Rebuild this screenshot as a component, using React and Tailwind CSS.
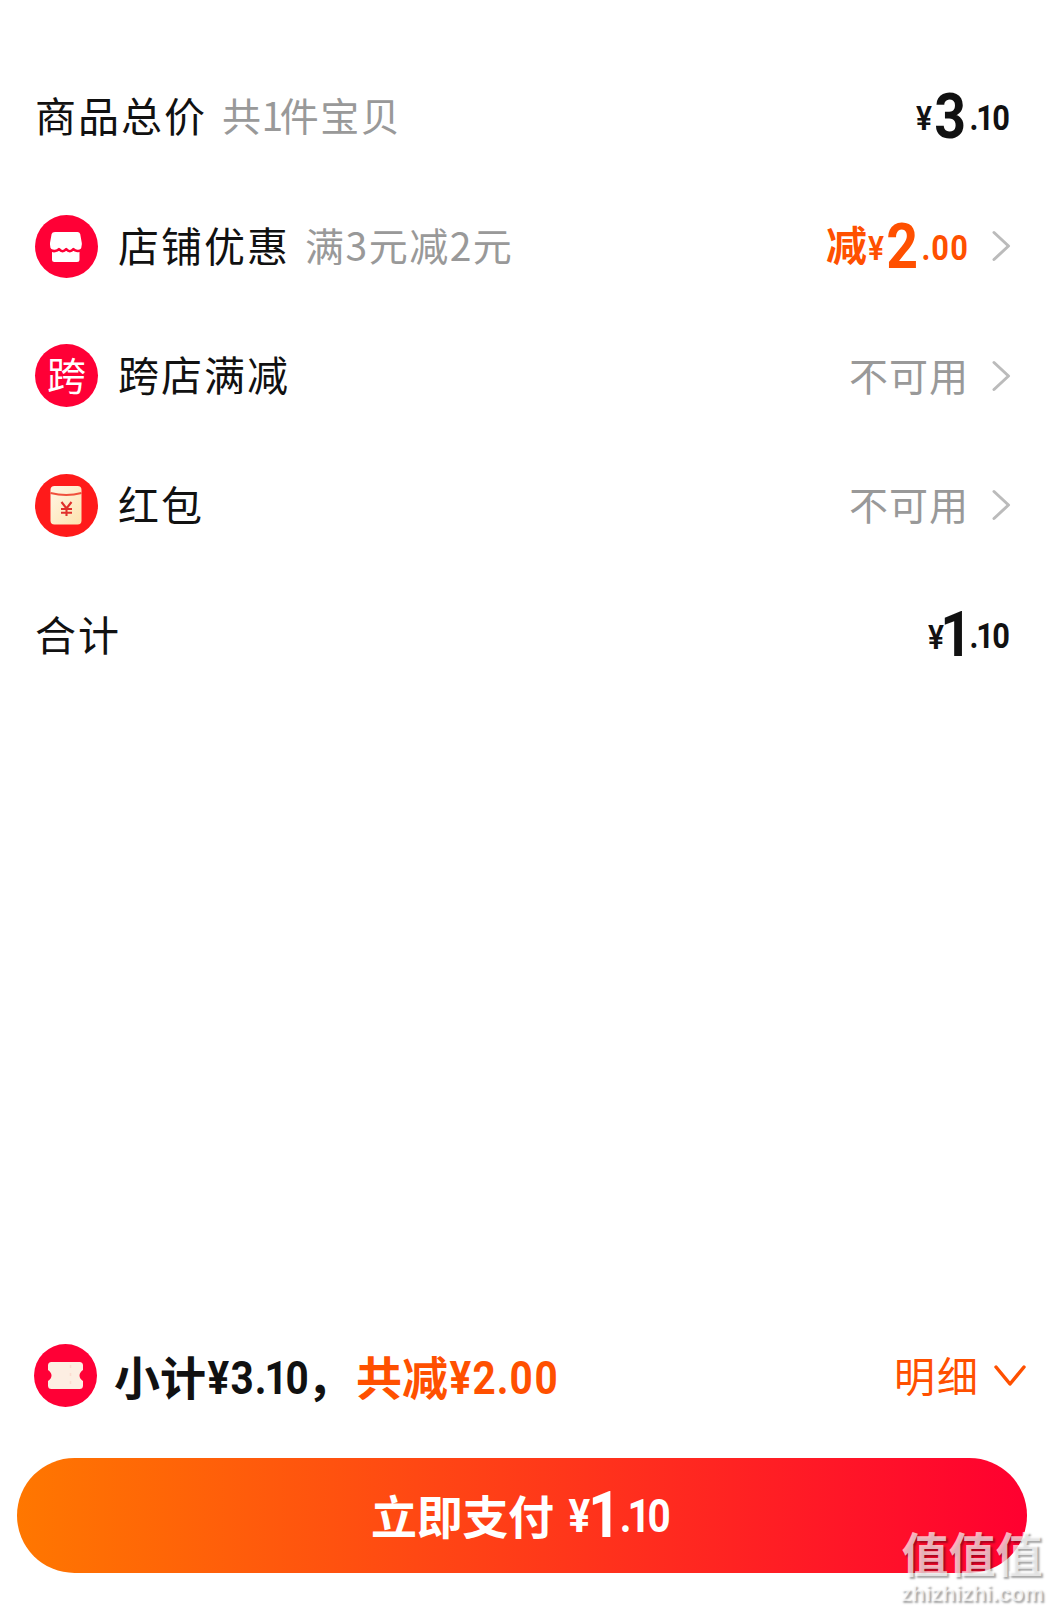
const ROWS = [
  { id: 'shop', label: '店铺优惠', hint: '满3元减2元', height: 'h-[130px]' },
  { id: 'cross', label: '跨店满减', height: 'h-[129px]' },
  { id: 'packet', label: '红包', height: 'h-[130px]' },
]

// One condensed numeral, centred in a cell as wide as its ink
function Digit({ children, className }) {
  return (
    <span className={`flex justify-center font-['Roboto',sans-serif] leading-none ${className}`}>
      <span className="block scale-x-[0.88]">{children}</span>
    </span>
  )
}

function Price({ whole, cents, narrow }) {
  return (
    <span className="flex items-center font-bold">
      <Digit className="w-[16px] text-[34px] pt-1 font-semibold">¥</Digit>
      <Digit className={`text-[63px] ${narrow ? 'w-[21px] ml-[2px] mr-[3px]' : 'w-[27px] ml-[5px] mr-[6px]'}`}>{whole}</Digit>
      <Digit className="w-[9px] text-[35px] pt-1">.</Digit>
      {cents.split('').map((c, i) => (
        <Digit key={i} className={`text-[35px] pt-1 ${c === '1' ? 'w-[13px]' : 'w-[16px] ml-[1px] mr-[2px]'}`}>{c}</Digit>
      ))}
    </span>
  )
}

function ChevronRight() {
  return (
    <svg className="w-[19px] h-[32px] ml-[23px]" viewBox="0 0 19 32" fill="none" stroke="#bbbbbb" strokeWidth="3" strokeLinecap="round" strokeLinejoin="round">
      <path d="M2 2.5 L16.5 16 L2 29.5" />
    </svg>
  )
}

function ShopIcon() {
  return (
    <svg className="w-[63px] h-[63px]" viewBox="0 0 63 63">
      <circle cx="31.5" cy="31.5" r="31.5" fill="#ff0036" />
      <path fill="#fff" d="M20 17h22.500q2 0 2.700 2l1.600 9q.4 4.500-2.300 7.500V44.500q0 2.500-2.500 2.500H19.500q-2.500 0-2.500-2.500V35.500q-2.400-3-2-7.500l1.600-9q.6-2 3.400-2z" />
      <path d="M14 34q3 2.500 6 2 2.600-.3 4-1.800 3.500 4 7.200 0 3.600 4 7.200 0 1.500 1.600 4 1.800 3 .4 6-2" fill="none" stroke="#ff0036" strokeWidth="2.600" strokeLinejoin="round" />
    </svg>
  )
}

function CrossIcon() {
  return (
    <span className="flex w-[63px] h-[63px] items-center justify-center rounded-full bg-[#ff0036] pb-[4px] text-[39px] leading-none text-white">
      跨
    </span>
  )
}

function PacketIcon() {
  return (
    <svg className="w-[63px] h-[63px]" viewBox="0 0 63 63">
      <defs>
        <linearGradient id="packet" x1="0" y1="0" x2="1" y2="1">
          <stop offset="0" stopColor="#fff6e6" />
          <stop offset="1" stopColor="#fde3ae" />
        </linearGradient>
      </defs>
      <circle cx="31.5" cy="31.5" r="31.5" fill="#ff1a1a" />
      <rect x="15.5" y="12" width="31" height="38.5" rx="4" fill="url(#packet)" />
      <path d="M15.5 19q16 4 31 0" fill="none" stroke="#f0503c" strokeWidth="2" />
      <path d="M26.5 28l5 6.5 5-6.5M31.5 34.5v7.5M26 35h11M26 38.7h11" fill="none" stroke="#e0302c" strokeWidth="2.1" />
    </svg>
  )
}

function CouponIcon() {
  return (
    <svg className="w-[63px] h-[63px]" viewBox="0 0 63 63">
      <circle cx="31.5" cy="31.5" r="31.5" fill="#ff0036" />
      <path fill="#fdeee2" d="M17.500 18h28q3.500 0 3.500 3.500v4.500q-3.500 2.500-3.500 5.500t3.500 5.500v4.500q0 3.500-3.500 3.500h-28q-3.500 0-3.500-3.500V37q3.500-2.500 3.500-5.500T14 26v-4.500q0-3.500 3.500-3.500z" />
      <path d="M36.500 21v22" stroke="#fcdcd0" strokeWidth="1.5" strokeDasharray="3 5" />
    </svg>
  )
}

const ICONS = { shop: ShopIcon, cross: CrossIcon, packet: PacketIcon }

function Label({ children }) {
  return <span className="pb-[4px] text-[41px] leading-none tracking-[2px]">{children}</span>
}

function Hint({ children }) {
  return <span className="ml-[15px] pb-[4px] text-[39px] leading-none tracking-[1.5px] text-[#999999]">{children}</span>
}

function DiscountRow({ row }) {
  const Icon = ICONS[row.id]
  return (
    <div className={`flex items-center pl-[35px] pr-[40px] ${row.height}`}>
      <Icon />
      <span className="ml-[20px] flex items-center">
        <Label>{row.label}</Label>
        {row.hint && <Hint>{row.hint}</Hint>}
      </span>
      <span className="ml-auto flex items-center">
        {row.id === 'shop' ? (
          <span className="flex items-center text-[#ff5000]">
            <span className="mr-[1px] pb-[6px] text-[41px] font-bold leading-none">减</span>
            <Price whole="2" cents="00" />
          </span>
        ) : (
          <span className="pb-[3px] text-[39px] leading-none tracking-[1px] text-[#999999]">不可用</span>
        )}
        <ChevronRight />
      </span>
    </div>
  )
}

function Amount({ value }) {
  return (
    <span className="flex pt-[4px] text-[46px]">
      <Digit className="w-[24px]">¥</Digit>
      {value.split('').map((c, i) => (
        <Digit key={i} className={c === '.' ? 'w-[12px]' : c === '1' ? 'w-[18px]' : 'w-[25px]'}>{c}</Digit>
      ))}
    </span>
  )
}

export default function App() {
  return (
    <main lang="zh-CN" className="relative flex h-[1612px] w-[1051px] flex-col overflow-hidden bg-white pt-[51px] font-['Noto_Sans_CJK_SC',sans-serif] text-[#111111]">
      <div className="flex h-[130px] items-center justify-between pl-[35px] pr-[40px]">
        <span className="flex items-center">
          <Label>商品总价</Label>
          <Hint>共<span className="-ml-[1px] -mr-[5px]">1</span>件宝贝</Hint>
        </span>
        <Price whole="3" cents="10" />
      </div>

      {ROWS.map(row => <DiscountRow key={row.id} row={row} />)}

      <div className="flex h-[129px] items-center justify-between pl-[35px] pr-[40px]">
        <span className="flex pt-[2px]"><Label>合计</Label></span>
        <Price whole="1" cents="10" narrow />
      </div>

      <footer className="mt-auto pb-[39px]">
        <div className="flex h-[64px] items-center pl-[34px] pr-[24px]">
          <span className="pb-[2px]"><CouponIcon /></span>
          <span className="ml-[17px] flex items-center text-[46px] font-bold leading-none">
            <span className="pb-[3px]">小计</span>
            <Amount value="3.10" />
            <span className="-ml-[3px] mr-[3px] pb-[3px]">，</span>
            <span className="flex items-center text-[#ff5000]">
              <span className="pb-[3px]">共减</span>
              <Amount value="2.00" />
            </span>
          </span>
          <span className="ml-auto flex items-center text-[#ff5000]">
            <Label>明细</Label>
            <svg className="ml-[13px] h-[24px] w-[34px]" viewBox="0 0 34 24" fill="none" stroke="currentColor" strokeWidth="3.5" strokeLinecap="round" strokeLinejoin="round">
              <path d="M3 3 L17 20 L31 3" />
            </svg>
          </span>
        </div>

        <button className="ml-[17px] mt-[50px] flex h-[115px] w-[1010px] items-center rounded-full bg-linear-to-r/srgb from-[#ff7700] to-[#ff0030] pl-[354px] font-bold text-white">
          <span className="pb-[3px] text-[46px] leading-none tracking-[-0.3px]">立即支付</span>
          <span className="ml-[14px] flex items-center">
            <Digit className="w-[24px] text-[46px]">¥</Digit>
            <Digit className="ml-[3px] w-[20px] text-[64px]">1</Digit>
            <Digit className="ml-[6px] w-[10px] text-[46px]">.</Digit>
            <Digit className="w-[17px] text-[46px]">1</Digit>
            <Digit className="w-[23px] text-[46px]">0</Digit>
          </span>
        </button>
      </footer>

      {/* Site watermark over the button's corner */}
      <div className="absolute right-[8px] top-[1524px] flex w-[142px] flex-col items-center text-white/70 [text-shadow:2px_2px_2px_rgba(0,0,0,0.35)]">
        <span className="text-[47px] font-bold leading-[56px]">值值值</span>
        <span className="font-['Liberation_Sans',sans-serif] text-[22px] font-bold leading-[28px]">zhizhizhi.com</span>
      </div>
    </main>
  )
}
